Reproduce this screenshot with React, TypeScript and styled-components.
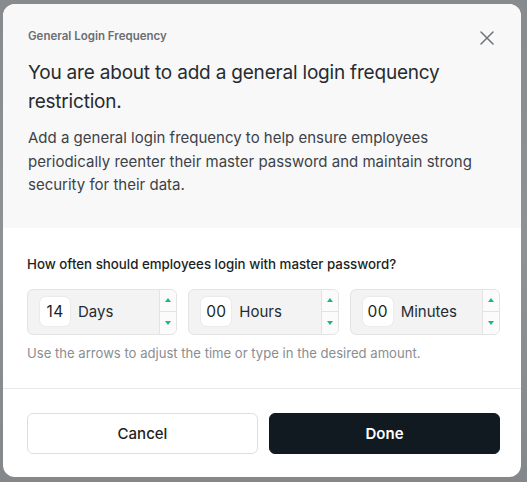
import React from "react";
import styled, { createGlobalStyle } from "styled-components";

const Global = createGlobalStyle`
  html, body { margin: 0; padding: 0; }
  body {
    font-family: Inter, "Noto Sans", "Liberation Sans", sans-serif;
    background: #8c9093;
    width: 527px;
    height: 482px;
    overflow: hidden;
  }
`;

const Backdrop = styled.div`
  width: 527px;
  height: 482px;
  box-sizing: border-box;
  padding: 4px 6px 5px 3px;
  background: linear-gradient(180deg, #878b8e 0%, #8e9295 50%, #84888b 100%);
`;

const Dialog = styled.div`
  width: 518px;
  height: 473px;
  background: #ffffff;
  border-radius: 12px;
  overflow: hidden;
  display: flex;
  flex-direction: column;
`;

const Header = styled.div`
  position: relative;
  background: #f8f8f8;
  padding: 24px 24px 31px 25px;
`;

const Eyebrow = styled.div`
  font-size: 11.5px;
  line-height: 16px;
  font-weight: 600;
  color: #6b6e72;
`;

const Title = styled.h1`
  margin: 14px 0 0;
  font-size: 19px;
  line-height: 29px;
  font-weight: 400;
  color: #262b31;
  letter-spacing: -0.2px;
`;

const Desc = styled.p`
  margin: 10px 0 0;
  font-size: 15px;
  line-height: 23.5px;
  color: #3d4247;
  padding-right: 20px;
`;

const CloseBtn = styled.button`
  position: absolute;
  top: 22px;
  right: 22px;
  width: 24px;
  height: 24px;
  padding: 0;
  border: none;
  background: transparent;
  display: flex;
  align-items: center;
  justify-content: center;
`;

const Body = styled.div`
  padding: 27px 21px 26px 24px;
  border-bottom: 1px solid #e8e8e8;
`;

const Question = styled.div`
  font-size: 13.3px;
  line-height: 18px;
  font-weight: 500;
  color: #1c1f23;
`;

const Row = styled.div`
  margin-top: 16px;
  display: grid;
  grid-template-columns: repeat(3, 1fr);
  gap: 11px;
`;

const Field = styled.div`
  height: 46px;
  box-sizing: border-box;
  border: 1px solid #e3e3e3;
  border-radius: 6px;
  background: #f3f3f3;
  display: flex;
  align-items: center;
`;

const NumBox = styled.div`
  margin-left: 12px;
  width: 30px;
  height: 29px;
  border-radius: 6px;
  background: #ffffff;
  box-shadow: 0 0 0 1px #ebebeb;
  display: flex;
  align-items: center;
  justify-content: center;
  font-size: 15.5px;
  color: #1c1f23;
  letter-spacing: 0.3px;
`;

const Unit = styled.div`
  flex: 1;
  margin-left: 8px;
  font-size: 15px;
  color: #262b31;
`;

const Stepper = styled.div`
  width: 16px;
  align-self: stretch;
  border-left: 1px solid #e3e3e3;
  display: flex;
  flex-direction: column;
`;

const StepHalf = styled.div<{ $top?: boolean }>`
  flex: 1;
  display: flex;
  align-items: center;
  justify-content: center;
  border-bottom: ${(p) => (p.$top ? "1px solid #e3e3e3" : "none")};
  background: #fbfbfb;
  border-radius: ${(p) => (p.$top ? "0 5px 0 0" : "0 0 5px 0")};
`;

const Hint = styled.div`
  margin-top: 9px;
  font-size: 13.1px;
  line-height: 18px;
  color: #8a8d91;
`;

const Footer = styled.div`
  padding: 24px 21px 24px 24px;
  display: grid;
  grid-template-columns: 1fr 1fr;
  gap: 11px;
`;

const Button = styled.button<{ $primary?: boolean }>`
  height: 41px;
  border-radius: 6px;
  font-family: inherit;
  font-size: 15px;
  font-weight: ${(p) => (p.$primary ? 600 : 500)};
  color: ${(p) => (p.$primary ? "#ffffff" : "#1c1f23")};
  background: ${(p) => (p.$primary ? "#111a20" : "#ffffff")};
  border: 1px solid ${(p) => (p.$primary ? "#111a20" : "#dedede")};
`;

const Tri = ({ up }: { up?: boolean }) => (
  <svg width="6" height="4" viewBox="0 0 6 4">
    <path d={up ? "M0 4 L3 0 L6 4 Z" : "M0 0 L6 0 L3 4 Z"} fill="#1cb874" />
  </svg>
);

const TimeField = ({ value, unit }: { value: string; unit: string }) => (
  <Field>
    <NumBox>{value}</NumBox>
    <Unit>{unit}</Unit>
    <Stepper>
      <StepHalf $top>
        <Tri up />
      </StepHalf>
      <StepHalf>
        <Tri />
      </StepHalf>
    </Stepper>
  </Field>
);

export default function App() {
  return (
    <>
      <Global />
      <Backdrop>
        <Dialog>
          <Header>
            <Eyebrow>General Login Frequency</Eyebrow>
            <Title>
              You are about to add a general login frequency restriction.
            </Title>
            <Desc>
              Add a general login frequency to help ensure employees
              periodically reenter their master password and maintain strong
              security for their data.
            </Desc>
            <CloseBtn aria-label="Close">
              <svg width="16" height="16" viewBox="0 0 16 16">
                <path
                  d="M2 2 L14 14 M14 2 L2 14"
                  stroke="#6f7377"
                  strokeWidth="1.5"
                  strokeLinecap="round"
                />
              </svg>
            </CloseBtn>
          </Header>
          <Body>
            <Question>
              How often should employees login with master password?
            </Question>
            <Row>
              <TimeField value="14" unit="Days" />
              <TimeField value="00" unit="Hours" />
              <TimeField value="00" unit="Minutes" />
            </Row>
            <Hint>
              Use the arrows to adjust the time or type in the desired amount.
            </Hint>
          </Body>
          <Footer>
            <Button>Cancel</Button>
            <Button $primary>Done</Button>
          </Footer>
        </Dialog>
      </Backdrop>
    </>
  );
}
